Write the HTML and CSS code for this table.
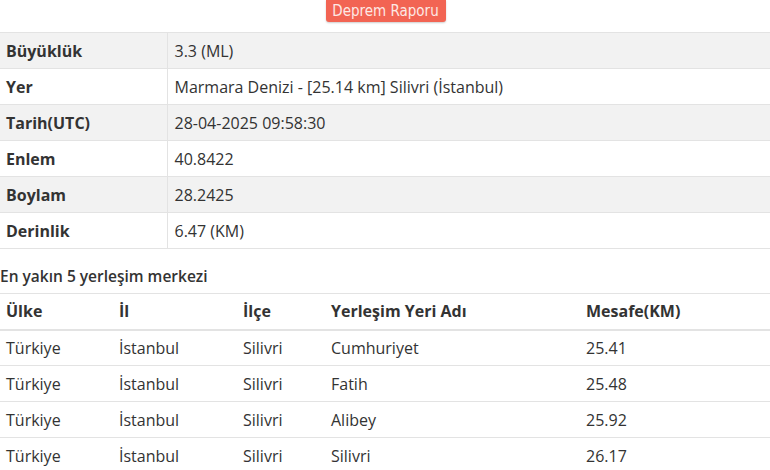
FILE: index.html
```html
<!DOCTYPE html>
<html lang="tr">
<head>
    <meta charset="UTF-8">
    <meta name="viewport" content="width=device-width, initial-scale=1.0">
    <title>Deprem Raporu</title>
    <link rel="stylesheet" href="styles.css">
</head>
<body>
    <div class="report-head">
        <button class="report-button">Deprem Raporu</button>
    </div>

    <table class="info-table">
        <tr><th>Büyüklük</th><td>3.3 (ML)</td></tr>
        <tr><th>Yer</th><td>Marmara Denizi - [25.14 km] Silivri (İstanbul)</td></tr>
        <tr><th>Tarih(UTC)</th><td>28-04-2025 09:58:30</td></tr>
        <tr><th>Enlem</th><td>40.8422</td></tr>
        <tr><th>Boylam</th><td>28.2425</td></tr>
        <tr><th>Derinlik</th><td>6.47 (KM)</td></tr>
    </table>

    <h4 class="section-title">En yakın 5 yerleşim merkezi</h4>

    <table class="near-table">
        <colgroup>
            <col class="c-ulke">
            <col class="c-il">
            <col class="c-ilce">
            <col class="c-yer">
            <col>
        </colgroup>
        <thead>
            <tr><th>Ülke</th><th>İl</th><th>İlçe</th><th>Yerleşim Yeri Adı</th><th>Mesafe(KM)</th></tr>
        </thead>
        <tbody>
            <tr><td>Türkiye</td><td>İstanbul</td><td>Silivri</td><td>Cumhuriyet</td><td>25.41</td></tr>
            <tr><td>Türkiye</td><td>İstanbul</td><td>Silivri</td><td>Fatih</td><td>25.48</td></tr>
            <tr><td>Türkiye</td><td>İstanbul</td><td>Silivri</td><td>Alibey</td><td>25.92</td></tr>
            <tr><td>Türkiye</td><td>İstanbul</td><td>Silivri</td><td>Silivri</td><td>26.17</td></tr>
        </tbody>
    </table>
</body>
</html>
```

FILE: styles.css
```css
:root {
    --text-color: #333;
    --line-color: #e3e3e3;
    --stripe-color: #f2f2f2;
    --button-color: #f26453;
}

* {
    margin: 0;
    padding: 0;
    box-sizing: border-box;
}

body {
    font-family: 'Open Sans', 'Noto Sans', sans-serif;
    font-size: 16px;
    color: var(--text-color);
    background: #fff;
}

.report-head {
    display: flex;
    justify-content: center;
    height: 32px;
}

.report-button {
    width: 120px;
    height: 22px;
    border: none;
    border-radius: 0 0 3px 3px;
    background: var(--button-color);
    color: #fde8e4;
    font-family: 'Liberation Sans Narrow', 'DejaVu Sans Condensed', sans-serif;
    font-size: 15px;
    box-shadow: 0 1px 2px rgba(0, 0, 0, 0.2);
    margin-left: 1px;
}

table {
    width: 100%;
    border-collapse: collapse;
}

th, td {
    text-align: left;
    height: 36px;
    padding: 0 6px;
    line-height: 20px;
    vertical-align: middle;
}

th {
    font-weight: 700;
}

.info-table {
    border-top: 1px solid var(--line-color);
}

.info-table tr {
    border-bottom: 1px solid var(--line-color);
}

.info-table tr:nth-child(odd) {
    background: var(--stripe-color);
}

.info-table th {
    width: 167px;
    border-right: 1px solid var(--line-color);
}

.info-table td {
    padding-left: 7px;
}

.section-title {
    font-size: 15.5px;
    font-weight: 600;
    height: 44px;
    line-height: 20px;
    padding-top: 17px;
}

.near-table {
    table-layout: fixed;
    border-top: 1px solid var(--line-color);
}

.near-table thead tr {
    border-bottom: 2px solid var(--line-color);
}

.near-table tbody tr {
    border-bottom: 1px solid var(--line-color);
}

.c-ulke { width: 113px; }
.c-il { width: 124px; }
.c-ilce { width: 88px; }
.c-yer { width: 255px; }
```
